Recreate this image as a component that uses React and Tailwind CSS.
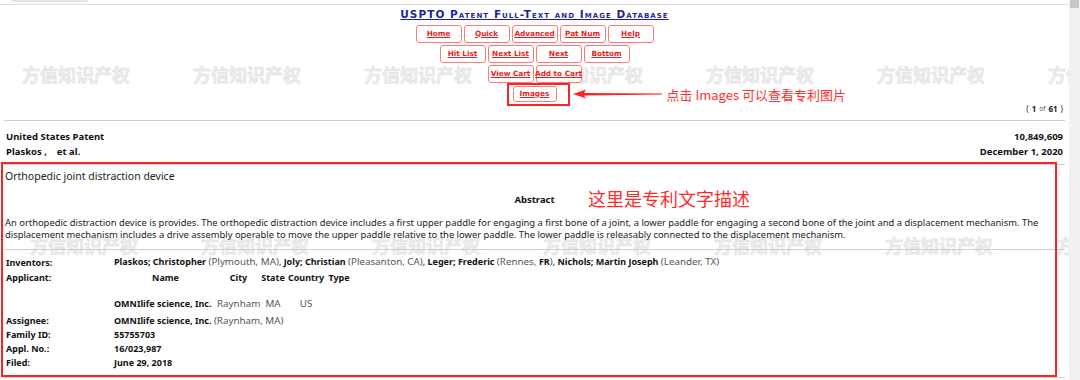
import React from "react";

const SANS = "font-['Noto_Sans','Noto_Sans_CJK_SC',sans-serif]";
const CJK = "font-['Noto_Sans_CJK_SC','Noto_Sans',sans-serif]";

function Btn({ children, w = "w-[46px]", h = "h-[18px]" }) {
  return (
    <span
      className={`flex ${h} ${w} items-center justify-center rounded-[3px] border border-[#ff7a7a] bg-white font-['DejaVu_Sans',sans-serif] text-[7.3px] font-bold whitespace-nowrap text-[#ee1c1c] underline`}
    >
      {children}
    </span>
  );
}

const marks = [22, 193, 364, 535, 706, 877, 1048];

function Label({ children }) {
  return <div className="w-[108px] shrink-0 text-[9px] font-bold text-[#111]">{children}</div>;
}

function G({ children }) {
  return <span className="text-[9.8px] text-[#555]">{children}</span>;
}

export default function App() {
  return (
    <div className={`relative h-[380px] w-[1080px] overflow-hidden bg-white ${SANS}`}>
      {/* watermarks */}
      <div className="pointer-events-none absolute inset-0 z-0">
        {marks.map((x) => (
          <span
            key={"a" + x}
            className={`absolute top-[65px] whitespace-nowrap ${CJK} text-[18px] font-bold leading-none text-[#ededed] [-webkit-text-stroke:0.5px_#dddddd]`}
            style={{ left: x }}
          >
            方信知识产权
          </span>
        ))}
        {marks.map((x) => (
          <span
            key={"b" + x}
            className={`absolute top-[236px] whitespace-nowrap ${CJK} text-[18px] font-bold leading-none text-[#ededed] [-webkit-text-stroke:0.5px_#dddddd]`}
            style={{ left: x + 8 }}
          >
            方信知识产权
          </span>
        ))}
      </div>

      <div className="relative z-10 flex h-full">
        {/* main column */}
        <div className="flex w-[1069px] flex-col">
          <div className="relative h-[5px] border-b border-[#dedede]">
            <div className="absolute left-[12px] top-0 h-[2px] w-[76px] rounded-b-[3px] bg-[#e4e4e4]" />
          </div>
          <div className="flex h-[14px] items-end justify-center">
            <span className="font-['DejaVu_Sans',sans-serif] text-[10.5px] leading-none font-bold tracking-[1.05px] text-[#1f1f9e] underline [font-variant:small-caps]">
              USPTO Patent Full-Text and Image Database
            </span>
          </div>
          <div className="mt-[6px] flex flex-col items-center gap-[2px]">
            <div className="flex gap-[2px]">
              <Btn>Home</Btn>
              <Btn>Quick</Btn>
              <Btn>Advanced</Btn>
              <Btn>Pat Num</Btn>
              <Btn>Help</Btn>
            </div>
            <div className="flex gap-[2px]">
              <Btn>Hit List</Btn>
              <Btn>Next List</Btn>
              <Btn>Next</Btn>
              <Btn>Bottom</Btn>
            </div>
            <div className="flex gap-[2px]">
              <Btn>View Cart</Btn>
              <Btn>Add to Cart</Btn>
            </div>
            <div className="relative mt-[1px]">
              <Btn w="w-[44px]" h="h-[16px]">Images</Btn>
              <div className="absolute -left-[6px] -top-[3px] h-[23px] w-[63px] border-2 border-[#f22]" />
              <svg
                className="absolute left-[59px] top-[3px]"
                width="92"
                height="10"
                viewBox="0 0 92 10"
              >
                <path d="M1 5 L14 0.5 L12 4 L90 4.6 L90 5.4 L12 6.4 L14 9.5 Z" fill="#f22" />
              </svg>
              <span
                className={`absolute left-[154px] top-[2px] whitespace-nowrap ${CJK} text-[13px] leading-none text-[#ff3030]`}
              >
                点击 Images 可以查看专利图片
              </span>
            </div>
          </div>
          <div className="flex h-[14px] items-center justify-end gap-[3px] pr-[6px] text-[8px] whitespace-nowrap text-[#222]">
            <span>(</span>
            <b>1</b>
            <span className="text-[6.5px] text-[#555]">of</span>
            <b>61</b>
            <span>)</span>
          </div>
          <div className="mx-[4px] mt-[4px] border-t border-[#cfcfcf]" />
          <div className="mt-[8px] flex justify-between px-[6px] text-[9.5px] leading-[15px] font-bold text-[#111]">
            <div>
              <div>United States Patent</div>
              <div>Plaskos ,&nbsp;&nbsp;&nbsp; et al.</div>
            </div>
            <div className="text-right">
              <div>10,849,609</div>
              <div>December 1, 2020</div>
            </div>
          </div>
          <div className="mx-[4px] mt-[5px] border-t border-[#cfcfcf]" />

          <div className="px-[5px] text-[10.5px] leading-[14px] text-[#222]">
            <div className="mt-[4px]">Orthopedic joint distraction device</div>
          </div>
          <div className="mt-[10px] flex h-[14px] items-center justify-center text-[9.5px] font-bold text-[#111]">
            Abstract
          </div>
          <div className="px-[5px] pt-[10px] text-[9.4px] leading-[12px] whitespace-nowrap text-[#222]">
            An orthopedic distraction device is provides. The orthopedic distraction device includes a first upper paddle for engaging a first bone of a joint, a lower paddle for engaging a second bone of the joint and a displacement mechanism. The
            <br />
            displacement mechanism includes a drive assembly operable to move the upper paddle relative to the lower paddle. The lower paddle is releasably connected to the displacement mechanism.
          </div>
          <div className="mx-[4px] mt-[8px] border-t border-[#cfcfcf]" />

          <div className="px-[6px] pt-[5px] text-[9px] text-[#111]">
            <div className="flex h-[15px] items-center">
              <Label>Inventors:</Label>
              <div className="whitespace-nowrap">
                <b>Plaskos; Christopher</b> <G>(Plymouth, MA)</G>, <b>Joly; Christian</b>{" "}
                <G>(Pleasanton, CA)</G>, <b>Leger; Frederic</b> <G>(Rennes, </G>
                <b>FR</b>
                <G>)</G>, <b>Nichols; Martin Joseph</b> <G>(Leander, TX)</G>
              </div>
            </div>
            <div className="flex h-[15px] items-center">
              <Label>Applicant:</Label>
              <div className="flex font-bold">
                <div className="w-[103px] text-center">Name</div>
                <div className="w-[43px] text-center">City</div>
                <div className="w-[26px] text-center">State</div>
                <div className="w-[40px] text-center">Country</div>
                <div className="w-[26px] text-center">Type</div>
              </div>
            </div>
            <div className="mt-[12px] flex h-[15px] items-center">
              <Label />
              <div className="flex whitespace-nowrap">
                <div className="w-[103px] font-bold">OMNIlife science, Inc.</div>
                <div className="w-[43px]">
                  <G>Raynham</G>
                </div>
                <div className="w-[26px] text-center">
                  <G>MA</G>
                </div>
                <div className="w-[40px] text-center">
                  <G>US</G>
                </div>
                <div className="w-[26px]" />
              </div>
            </div>
            <div className="mt-[2px] flex h-[14px] items-center">
              <Label>Assignee:</Label>
              <div className="whitespace-nowrap">
                <b>OMNIlife science, Inc.</b> <G>(Raynham, MA)</G>
              </div>
            </div>
            <div className="flex h-[14px] items-center">
              <Label>Family ID:</Label>
              <b>55755703</b>
            </div>
            <div className="flex h-[14px] items-center">
              <Label>Appl. No.:</Label>
              <b>16/023,987</b>
            </div>
            <div className="flex h-[14px] items-center">
              <Label>Filed:</Label>
              <b>June 29, 2018</b>
            </div>
          </div>
          <div className="mx-[4px] mt-[7px] border-t border-[#cfcfcf]" />
        </div>

        {/* scrollbar */}
        <div className="flex w-[11px] flex-col bg-[#f1f1f1]">
          <div className="mx-[1px] h-[8px] bg-[#c8c8c8]" />
        </div>
      </div>

      {/* annotation box around description */}
      <div className="pointer-events-none absolute left-[1px] top-[162px] z-20 h-[215px] w-[1056px] border-2 border-[#f22]" />
      <span
        className={`absolute left-[588px] top-[189px] z-20 whitespace-nowrap ${CJK} text-[18px] leading-none text-[#ff2a2a]`}
      >
        这里是专利文字描述
      </span>
    </div>
  );
}
